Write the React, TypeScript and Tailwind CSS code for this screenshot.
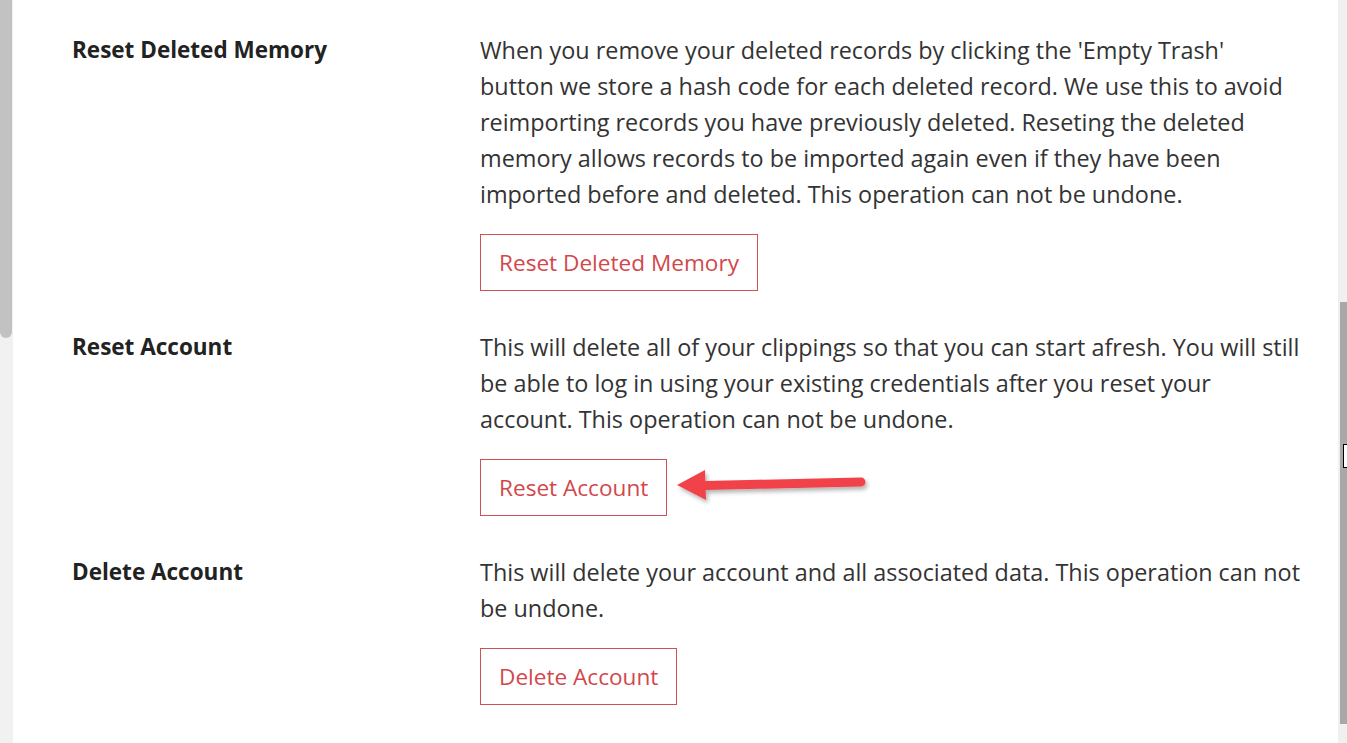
import React from 'react';

type Row = {
  title: string;
  lines: string[];
  action: string;
  pointer?: boolean;
};

const rows: Row[] = [
  {
    title: 'Reset Deleted Memory',
    lines: [
      "When you remove your deleted records by clicking the 'Empty Trash'",
      'button we store a hash code for each deleted record. We use this to avoid',
      'reimporting records you have previously deleted. Reseting the deleted',
      'memory allows records to be imported again even if they have been',
      'imported before and deleted. This operation can not be undone.',
    ],
    action: 'Reset Deleted Memory',
  },
  {
    title: 'Reset Account',
    lines: [
      'This will delete all of your clippings so that you can start afresh. You will still',
      'be able to log in using your existing credentials after you reset your',
      'account. This operation can not be undone.',
    ],
    action: 'Reset Account',
    pointer: true,
  },
  {
    title: 'Delete Account',
    lines: [
      'This will delete your account and all associated data. This operation can not',
      'be undone.',
    ],
    action: 'Delete Account',
  },
];

function Arrow() {
  return (
    <svg width="200" height="44" viewBox="0 0 200 44" className="ml-[9px] -mt-[4px]">
      <defs>
        <filter id="sh" x="-10%" y="-40%" width="130%" height="200%">
          <feDropShadow dx="2" dy="3" stdDeviation="2" floodColor="#000" floodOpacity="0.3" />
        </filter>
      </defs>
      <g filter="url(#sh)">
        <path d="M30 21.5 L185 18" stroke="#f1434a" strokeWidth="9" strokeLinecap="round" />
        <path d="M1 21 L29 6 L30 36 Z" fill="#f1434a" />
      </g>
    </svg>
  );
}

export default function App() {
  return (
    <div className="relative h-[743px] w-[1347px] overflow-hidden bg-white font-['Open_Sans',sans-serif]">
      {/* left scroll strip */}
      <div className="absolute left-0 top-0 h-full w-[13px] bg-[#f1f1f1]">
        <div className="h-[338px] w-[12px] rounded-b-[6px] bg-[#c2c2c2]" />
      </div>
      {/* right scrollbar */}
      <div className="absolute right-0 top-0 h-full w-[9px] bg-[#f0f0f0]">
        <div className="ml-[2px] mt-[302px] h-[422px] w-[7px] bg-[#a8a8a8]" />
      </div>

      <div className="flex flex-col gap-[38px] pl-[72px] pr-[40px] pt-[32px]">
        {rows.map((r) => (
          <div key={r.title} className="grid grid-cols-[408px_1fr]">
            <div className="text-[22.5px] font-bold leading-[36px] text-[#222]">{r.title}</div>
            <div>
              <p className="whitespace-nowrap text-[23.4px] leading-[36px] text-[#333]">
                {r.lines.map((l, i) => (
                  <React.Fragment key={i}>
                    {l}
                    {i < r.lines.length - 1 && <br />}
                  </React.Fragment>
                ))}
              </p>
              <div className="mt-[22px] flex items-center">
                <button className="h-[57px] border border-[#cd5256] bg-white px-[18px] pt-[1px] text-[22.6px] text-[#d2474c]">
                  {r.action}
                </button>
                {r.pointer && <Arrow />}
              </div>
            </div>
          </div>
        ))}
      </div>

      {/* mouse cursor at the edge */}
      <div className="absolute left-[1343px] top-[444px] h-[24px] w-[4px] border border-r-0 border-black bg-white" />
    </div>
  );
}
